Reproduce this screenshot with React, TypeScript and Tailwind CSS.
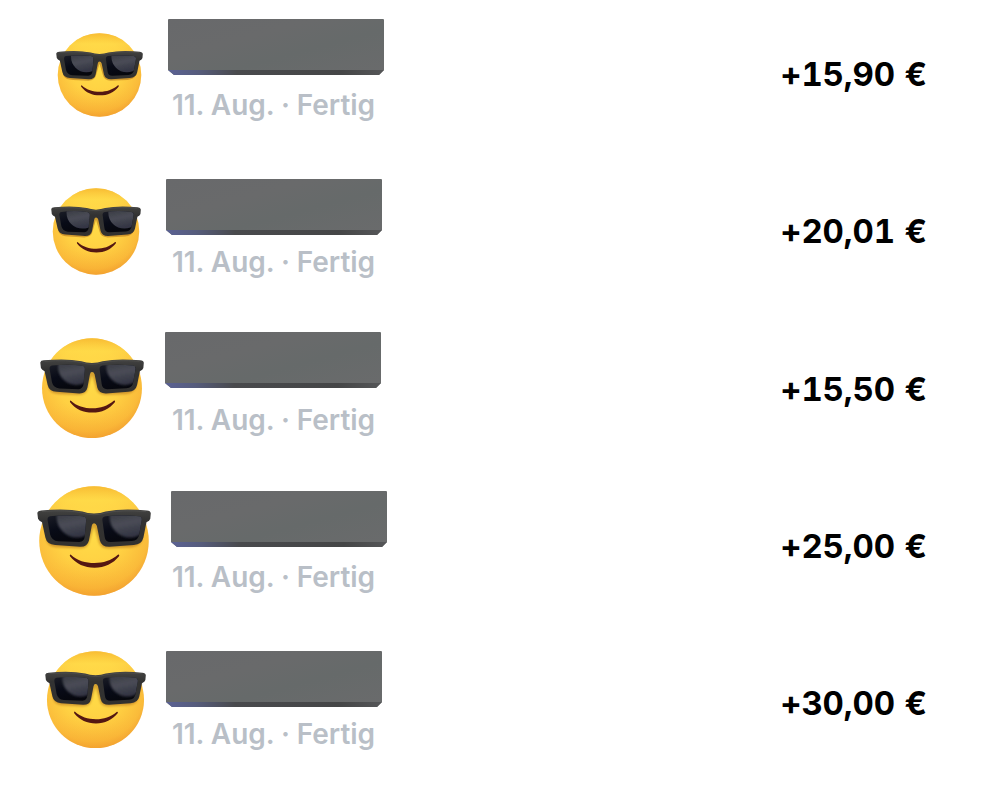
import { useId } from "react";
import clsx from "clsx";

interface Transaction {
    date: string;
    status: string;
    amount: string;
    avatarClass: string;
    nameClass: string;
}

const transactions: Transaction[] = [
    { date: "11. Aug.", status: "Fertig", amount: "+15,90 €", avatarClass: "ml-[56px] mt-[33px] w-[87px]", nameClass: "pl-[168px] pt-[19px]" },
    { date: "11. Aug.", status: "Fertig", amount: "+20,01 €", avatarClass: "ml-[50.5px] mt-[31px] w-[90px]", nameClass: "pl-[166px] pt-[21.75px]" },
    { date: "11. Aug.", status: "Fertig", amount: "+15,50 €", avatarClass: "ml-[39.5px] mt-[23.5px] w-[104px]", nameClass: "pl-[165px] pt-[17.5px]" },
    { date: "11. Aug.", status: "Fertig", amount: "+25,00 €", avatarClass: "ml-[37px] mt-[14.25px] w-[114px]", nameClass: "pl-[171px] pt-[19.25px]" },
    { date: "11. Aug.", status: "Fertig", amount: "+30,00 €", avatarClass: "ml-[45px] mt-[22px] w-[101px]", nameClass: "pl-[166px] pt-[22px]" },
];

// Smiley with sunglasses
const CoolAvatar = ({ className }: { className?: string }) => {
    const id = useId();
    const face = `${id}-face`;
    const warm = `${id}-warm`;
    const frame = `${id}-frame`;
    const lens = `${id}-lens`;
    const shine = `${id}-shine`;
    const soft = `${id}-soft`;
    const left = `${id}-left`;
    const right = `${id}-right`;
    const leftLens = "M13 30 Q30 28 45 30 Q49 30.5 48.7 34 L47.3 50 Q46.800 55 42 55.600 L21 54.800 Q14.500 54 13 48 L10.500 34 Q10 30.500 13 30Z";
    const rightLens = "M68 30 Q84 28 101 30 Q104.500 30.500 103.800 34 L101.300 48 Q100.300 54 94 54.500 L73 55.600 Q67.500 55.500 67 50 L64.800 34 Q64.300 30.500 68 30Z";

    return (
        <svg viewBox="0 0 113 109" className={className} aria-hidden="true">
            <defs>
                <radialGradient id={face} cx="0.47" cy="0.4" r="0.65">
                    <stop offset="0" stopColor="#ffdd48" />
                    <stop offset="0.5" stopColor="#ffd143" />
                    <stop offset="0.82" stopColor="#fabb3a" />
                    <stop offset="1" stopColor="#ec962f" />
                </radialGradient>
                <linearGradient id={warm} x1="0" y1="0" x2="0" y2="1">
                    <stop offset="0" stopColor="#f6b62d" stopOpacity="0.7" />
                    <stop offset="0.13" stopColor="#ffe04c" stopOpacity="0.5" />
                    <stop offset="0.3" stopColor="#ffd84c" stopOpacity="0" />
                    <stop offset="0.65" stopColor="#ffc13e" stopOpacity="0" />
                    <stop offset="1" stopColor="#f5a02b" stopOpacity="0.5" />
                </linearGradient>
                <linearGradient id={frame} x1="0" y1="0" x2="0" y2="1">
                    <stop offset="0" stopColor="#434342" />
                    <stop offset="0.3" stopColor="#323232" />
                    <stop offset="1" stopColor="#32312f" />
                </linearGradient>
                <linearGradient id={lens} x1="0" y1="0" x2="0.5" y2="1">
                    <stop offset="0" stopColor="#1b1d26" />
                    <stop offset="0.5" stopColor="#080b17" />
                    <stop offset="1" stopColor="#06070d" />
                </linearGradient>
                <linearGradient id={shine} x1="0" y1="0" x2="0.2" y2="1">
                    <stop offset="0.3" stopColor="#34363e" />
                    <stop offset="0.7" stopColor="#4a4c56" />
                    <stop offset="1" stopColor="#343644" />
                </linearGradient>
                <filter id={soft} x="-20%" y="-20%" width="140%" height="140%">
                    <feGaussianBlur stdDeviation="1" />
                </filter>
                <clipPath id={left}>
                    <path d={leftLens} />
                </clipPath>
                <clipPath id={right}>
                    <path d={rightLens} />
                </clipPath>
            </defs>
            <circle cx="56.500" cy="54.500" r="54.300" fill={`url(#${face})`} />
            <circle cx="56.500" cy="54.500" r="54.300" fill={`url(#${warm})`} />
            <path
                d="M6 36 L10 56 Q13 61 22 61 L42 62 Q51 61.500 52 55 L56.500 40 L61 55 Q62 61.500 71 62 L93 61 Q102 60 104 54 L108 36Z"
                fill="#a86518"
                opacity="0.5"
                filter={`url(#${soft})`}
            />
            <path
                d="M0.300 26.500 Q0.800 24.500 4 24.300 Q28 21.800 45 25.200 Q50 27 56.500 27.200 Q63 27 68 25.200 Q85 21.800 109 24.300 Q112.500 24.600 112.800 27 L112.300 32.500 Q111.800 34.500 108.500 36 L105.500 51 Q104 57.800 96 58.500 L72 60.200 Q64 60.500 62.300 54 L59.300 39.500 Q58.500 37 56.500 37 Q54.700 37 54.300 39.500 L51.500 54 Q50 60.500 42.500 60.200 L18 58.500 Q9.700 57.800 8.300 51 L5 36 Q2 34.500 1 32.500Z"
                fill={`url(#${frame})`}
            />
            <path d="M5 25.300 Q30 23.300 45 26.700 Q51 28.500 56.500 28.500 Q62 28.500 68 26.700 Q83 23.300 108 25.300" fill="none" stroke="#50504e" strokeWidth="0.800" />
            <path d={leftLens} fill={`url(#${lens})`} />
            <path d={rightLens} fill={`url(#${lens})`} />
            <g clipPath={`url(#${left})`}>
                <circle cx="39.500" cy="31" r="20" fill={`url(#${shine})`} filter={`url(#${soft})`} />
            </g>
            <g clipPath={`url(#${right})`}>
                <circle cx="92" cy="31" r="20" fill={`url(#${shine})`} filter={`url(#${soft})`} />
            </g>
            <path
                d="M33.300 67.800 Q32 68 32.700 69.700 C39 77.500 47 81 57 81 C67 81 75.500 77 81.300 69.700 Q82.200 67.700 80.500 67.900 C73 74 66 76.300 57 76.300 C48 76.300 40 74 33.300 67.800Z"
                fill="#541712"
            />
        </svg>
    );
};

// Covered-up name with a darker beveled bottom edge
const HiddenName = () => (
    <div className="flex h-14 w-[216px] flex-col justify-end overflow-hidden rounded-[1px] bg-[linear-gradient(165deg,#68696b_0%,#696a6b_35%,#666a6a_60%,#6a6b6c_100%)] [clip-path:polygon(0_0,100%_0,100%_51px,calc(100%-5px)_100%,6px_100%,0_51px)]">
        <div className="h-[5px] bg-[linear-gradient(90deg,#5b6294_0%,#565c7c_14%,#494a4d_32%,#454647_80%,#555658_100%)]" />
    </div>
);

const TransactionRow = ({ date, status, amount, avatarClass, nameClass }: Transaction) => (
    <li className="grid h-[157.25px] grid-cols-[1fr_auto] pr-[73px]">
        <div className="grid">
            <div className="col-start-1 row-start-1">
                <CoolAvatar className={clsx("block", avatarClass)} />
            </div>
            <div className="col-start-1 row-start-1">
                <div className={clsx("h-[85px]", nameClass)}>
                    <HiddenName />
                </div>
                <p className="pl-[172px] text-[28px] leading-10 font-semibold tracking-[-0.06px] whitespace-nowrap text-[#b9bfc7]">
                    {date} · {status}
                </p>
            </div>
        </div>
        <p className="pt-[54px] text-[33px] leading-10 font-bold tracking-[-0.15px] whitespace-nowrap text-black tabular-nums [word-spacing:1px]">{amount}</p>
    </li>
);

export default function App() {
    return (
        <main className="h-[793px] w-[1000px] overflow-hidden bg-white font-['Inter',sans-serif]">
            <ul>
                {transactions.map((transaction) => (
                    <TransactionRow key={transaction.amount} {...transaction} />
                ))}
            </ul>
        </main>
    );
}
